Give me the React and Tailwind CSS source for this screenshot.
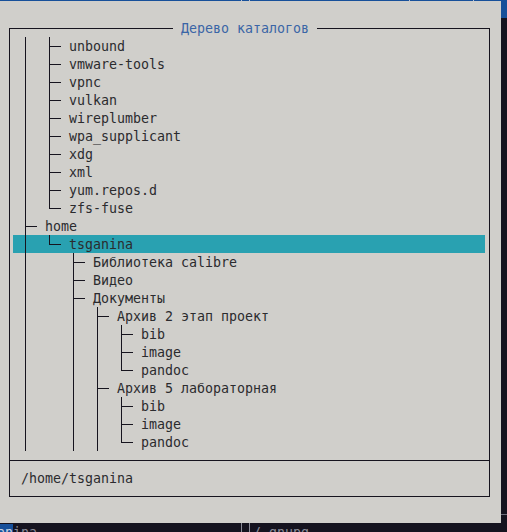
import React from "react";

const LINE = "bg-[#16141e]";

function Conn({ type }) {
  if (type === "E") return <div className="w-[24px] h-full shrink-0" />;
  if (type === "V")
    return (
      <div className="w-[24px] h-full shrink-0 flex">
        <div className={`ml-[4px] w-px h-full ${LINE}`} />
      </div>
    );
  if (type === "T")
    return (
      <div className="w-[24px] h-full shrink-0 flex">
        <div className={`ml-[4px] w-px h-full ${LINE}`} />
        <div className={`w-[11px] h-px mt-[9px] ${LINE}`} />
      </div>
    );
  // L
  return (
    <div className="w-[24px] h-full shrink-0 flex items-start">
      <div className={`ml-[4px] w-px h-[10px] ${LINE}`} />
      <div className={`w-[11px] h-px mt-[9px] ${LINE}`} />
    </div>
  );
}

const etc = [
  "unbound",
  "vmware-tools",
  "vpnc",
  "vulkan",
  "wireplumber",
  "wpa_supplicant",
  "xdg",
  "xml",
  "yum.repos.d",
];

const rows = [
  ...etc.map((t) => ({ c: ["V", "T"], t })),
  { c: ["V", "L"], t: "zfs-fuse" },
  { c: ["T"], t: "home" },
  { c: ["V", "L"], t: "tsganina", hl: true },
  { c: ["V", "E", "T"], t: "Библиотека calibre" },
  { c: ["V", "E", "T"], t: "Видео" },
  { c: ["V", "E", "T"], t: "Документы" },
  { c: ["V", "E", "V", "T"], t: "Архив 2 этап проект" },
  { c: ["V", "E", "V", "V", "T"], t: "bib" },
  { c: ["V", "E", "V", "V", "T"], t: "image" },
  { c: ["V", "E", "V", "V", "L"], t: "pandoc" },
  { c: ["V", "E", "V", "T"], t: "Архив 5 лабораторная" },
  { c: ["V", "E", "V", "V", "T"], t: "bib" },
  { c: ["V", "E", "V", "V", "T"], t: "image" },
  { c: ["V", "E", "V", "V", "L"], t: "pandoc" },
];

export default function App() {
  return (
    <div
      className="w-[507px] h-[532px] bg-[#15131f] overflow-hidden flex flex-col text-[13.3px] leading-[18px] text-[#2b2b2e]"
      style={{ fontFamily: '"DejaVu Sans Mono", "Liberation Mono", monospace' }}
    >
      {/* top 1px blue line with separators */}
      <div className="h-px flex bg-[#17509a] shrink-0">
        <div className="w-[241px]" />
        <div className="w-px bg-[#b7c2d6]" />
        <div className="w-[7px]" />
        <div className="w-px bg-[#b7c2d6]" />
        <div className="w-[159px]" />
        <div className="w-px bg-[#b7c2d6]" />
        <div className="w-[63px]" />
        <div className="w-px bg-[#b7c2d6]" />
      </div>

      {/* middle */}
      <div className="h-[522px] flex shrink-0">
        {/* dialog */}
        <div className="w-[501px] h-full bg-[#d0cfcb] pt-[27px] pl-[9px]">
          <div className="relative w-[481px] h-[469px] border border-[#16141e] flex flex-col">
            <span className="absolute top-[-10px] left-[163px] h-[18px] pt-px px-[8px] bg-[#d0cfcb] text-[#3a65a6] whitespace-pre">
              Дерево каталогов
            </span>
            <div className="pt-[8px] pl-[3px] pr-[4px] flex flex-col">
              {rows.map((r, i) => (
                <div
                  key={i}
                  className={`h-[18px] flex pl-[8px] ${r.hl ? "bg-[#29a1b1]" : ""}`}
                >
                  {r.c.map((c, j) => (
                    <Conn key={j} type={c} />
                  ))}
                  <span className="whitespace-pre pt-px">{r.t}</span>
                </div>
              ))}
            </div>
            <div className={`mt-[9px] h-px w-full ${LINE}`} />
            <div className="pt-[9px] pl-[11px] h-[26px]">
              <span className="whitespace-pre">/home/tsganina</span>
            </div>
          </div>
        </div>
        {/* right strip */}
        <div className="flex-1 flex flex-col">
          <div className="h-[17px] bg-[#17509a]" />
          <div className="h-[496px]" />
          <div className="h-px bg-[#6f6f7c]" />
          <div className="flex-1" />
        </div>
      </div>

      {/* bottom strip */}
      <div className="h-[9px] flex overflow-hidden shrink-0 text-[#8b8b98]">
        <div className="ml-[-3px] h-[18px] pt-px flex whitespace-pre">
          <span className="bg-[#17509a] text-[#c9d3e4]">an</span>
          <span>ina</span>
        </div>
        <div className="w-[204px]" />
        <div className="w-px h-full bg-[#8b8b98]" />
        <div className="w-[7px]" />
        <div className="w-px h-full bg-[#8b8b98]" />
        <div className="w-[3px]" />
        <span className="h-[18px] pt-px whitespace-pre">/ gnupg</span>
      </div>
    </div>
  );
}
